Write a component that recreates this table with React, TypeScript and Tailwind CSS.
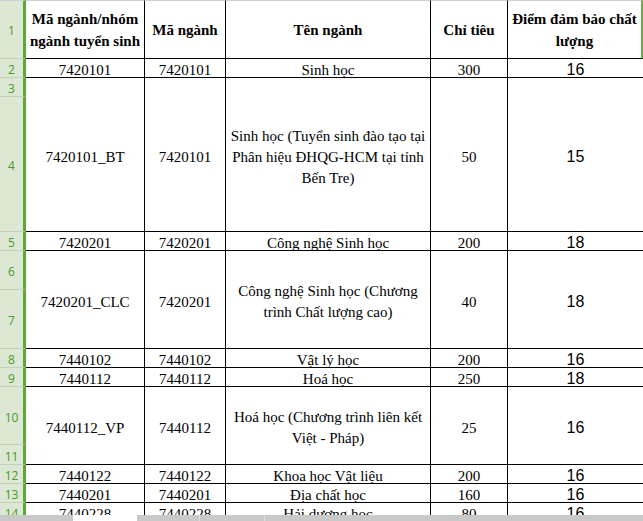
import React from "react";

type Row = {
  n: string[];
  span: number;
  a: string;
  b: string;
  c: string[];
  d: string;
  e: string;
};

const rows: Row[] = [
  { n: ["2"], span: 1, a: "7420101", b: "7420101", c: ["Sinh học"], d: "300", e: "16" },
  {
    n: ["3", "4"],
    span: 2,
    a: "7420101_BT",
    b: "7420101",
    c: ["Sinh học (Tuyển sinh đào tạo tại", "Phân hiệu ĐHQG-HCM tại tỉnh", "Bến Tre)"],
    d: "50",
    e: "15",
  },
  { n: ["5"], span: 1, a: "7420201", b: "7420201", c: ["Công nghệ Sinh học"], d: "200", e: "18" },
  {
    n: ["6", "7"],
    span: 2,
    a: "7420201_CLC",
    b: "7420201",
    c: ["Công nghệ Sinh học (Chương", "trình Chất lượng cao)"],
    d: "40",
    e: "18",
  },
  { n: ["8"], span: 1, a: "7440102", b: "7440102", c: ["Vật lý học"], d: "200", e: "16" },
  { n: ["9"], span: 1, a: "7440112", b: "7440112", c: ["Hoá học"], d: "250", e: "18" },
  {
    n: ["10", "11"],
    span: 2,
    a: "7440112_VP",
    b: "7440112",
    c: ["Hoá học (Chương trình liên kết", "Việt - Pháp)"],
    d: "25",
    e: "16",
  },
  { n: ["12"], span: 1, a: "7440122", b: "7440122", c: ["Khoa học Vật liệu"], d: "200", e: "16" },
  { n: ["13"], span: 1, a: "7440201", b: "7440201", c: ["Địa chất học"], d: "160", e: "16" },
  { n: ["14"], span: 1, a: "7440228", b: "7440228", c: ["Hải dương học"], d: "80", e: "16" },
];

const serif = "font-['Liberation_Serif','Times_New_Roman',serif] text-[15px] text-black";
const cell = "flex items-center justify-center text-center border-b border-black";
const rowHead =
  "flex items-center justify-center border-b border-b-[#c3d1ba] border-r-[3px] border-r-[#5ea83a] bg-[#dce8d3] text-[12px] text-[#4a9a2a] font-['Open_Sans','Liberation_Sans',sans-serif]";

export default function App() {
  return (
    <div className="flex h-[521px] w-[643px] flex-col overflow-hidden bg-white">
      <div className="h-[515px] overflow-hidden">
        <div className="grid grid-cols-[26px_119px_81px_205px_77px_135px] grid-rows-[59px_19px_19px_135px_19px_39px_59px_19px_19px_58px_20px_19px_19px_19px]">
          <div className={`${rowHead} border-t border-t-[#d0d0d0] pt-[2px]`}>1</div>
          <div className={`${cell} ${serif} border-r border-t border-t-[#d0d0d0] font-bold leading-[22px]`}>
            Mã ngành/nhóm
            <br />
            ngành tuyển sinh
          </div>
          <div className={`${cell} ${serif} border-r border-t border-t-[#d0d0d0] pt-[2px] font-bold`}>Mã ngành</div>
          <div className={`${cell} ${serif} border-r border-t border-t-[#d0d0d0] pt-[2px] font-bold`}>Tên ngành</div>
          <div className={`${cell} ${serif} border-r border-t border-t-[#d0d0d0] pt-[2px] font-bold`}>Chỉ tiêu</div>
          <div
            className={`${cell} ${serif} border-t border-t-[#d0d0d0] border-r-2 border-r-[#6aab45] font-bold leading-[22px]`}
          >
            Điểm đảm bảo chất
            <br />
            lượng
          </div>

          {rows.map((r) => {
            const span = r.span === 2 ? "row-span-2 pt-[5px]" : "pt-[4px]";
            return (
              <React.Fragment key={r.n[0]}>
                <div className={`${rowHead} pt-[4px]`}>{r.n[0]}</div>
                <div className={`${cell} ${serif} ${span} border-r`}>{r.a}</div>
                <div className={`${cell} ${serif} ${span} border-r`}>{r.b}</div>
                <div className={`${cell} ${serif} ${span} flex-col border-r leading-[21px]`}>
                  {r.c.map((l) => (
                    <span key={l}>{l}</span>
                  ))}
                </div>
                <div className={`${cell} ${serif} ${span} border-r`}>{r.d}</div>
                <div
                  className={`${cell} ${span} font-['Liberation_Sans',Arial,sans-serif] text-[16px] text-black`}
                >
                  {r.e}
                </div>
                {r.n[1] && <div className={`${rowHead} pt-[4px]`}>{r.n[1]}</div>}
              </React.Fragment>
            );
          })}
        </div>
      </div>
      <div className="flex h-[6px] bg-[#c9c9c9]">
        <div className="w-[73px]" />
        <div className="w-[64px] bg-white" />
        <div className="w-[63px] border-r border-[#dedede]" />
        <div className="w-[65px] border-r border-[#dedede]" />
        <div className="flex-1" />
      </div>
    </div>
  );
}
